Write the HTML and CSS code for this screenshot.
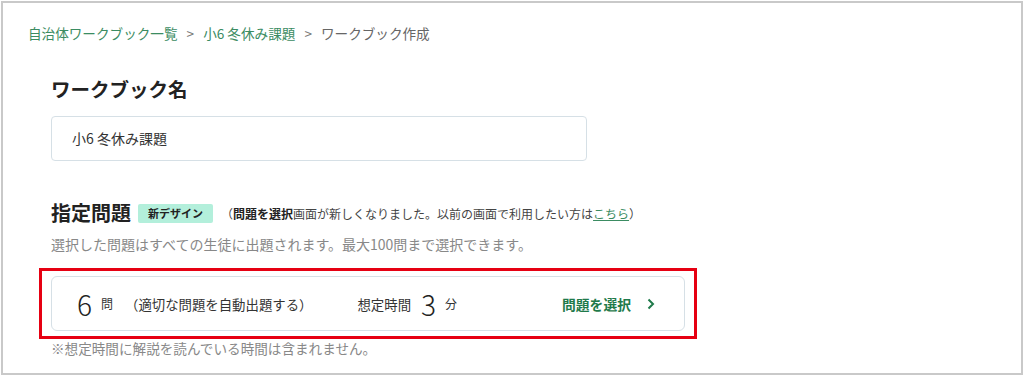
FILE: index.html
```html
<!DOCTYPE html>
<html lang="ja">
<head>
    <meta charset="UTF-8">
    <meta name="viewport" content="width=device-width, initial-scale=1.0">
    <title>ワークブック作成</title>
    <link rel="stylesheet" href="styles.css">
</head>
<body>

    <div class="frame">

        <!-- パンくず -->
        <div class="breadcrumb">
            <a href="#">自治体ワークブック一覧</a>
            <span class="sep">&gt;</span>
            <a href="#">小6 冬休み課題</a>
            <span class="sep">&gt;</span>
            <span class="current">ワークブック作成</span>
        </div>

        <div class="form">
            <h2 class="title">ワークブック名</h2>
            <div class="name-input">小6&nbsp;冬休み課題</div>

            <div class="title-row">
                <h2 class="title">指定問題</h2>
                <span class="badge">新デザイン</span>
                <span class="notice">（<b>問題を選択</b>画面が新しくなりました。以前の画面で利用したい方は<a href="#">こちら</a>）</span>
            </div>
            <p class="desc">選択した問題はすべての生徒に出題されます。最大100問まで選択できます。</p>

            <!-- 赤枠（注目箇所） -->
            <div class="highlight">
                <div class="card">
                    <span class="big">6</span>
                    <span class="unit">問</span>
                    <span class="auto">（適切な問題を自動出題する）</span>
                    <span class="label">想定時間</span>
                    <span class="big">3</span>
                    <span class="unit">分</span>
                    <a href="#" class="select">問題を選択
                        <svg width="8" height="12" viewBox="0 0 8 12"><polyline points="1.5,1.5 6,6 1.5,10.5" fill="none" stroke="#1f7a4a" stroke-width="2"/></svg>
                    </a>
                </div>
            </div>
            <p class="note">※想定時間に解説を読んでいる時間は含まれません。</p>
        </div>
    </div>

</body>
</html>
```

FILE: styles.css
```css
    body, html {
        margin: 0;
        padding: 0;
        background-color: white;
        font-family: "Noto Sans CJK JP", "Noto Sans", sans-serif;
        color: #222;
    }

    .frame {
        margin: 1px 1px 0 1px;
        height: 374px;
        box-sizing: border-box;
        border: 2px solid #c9c9c9;
        padding: 20px 0 0 25px;
    }

    .breadcrumb {
        font-size: 13.6px;
        line-height: 20px;
        color: #666;
    }

    .breadcrumb a {
        color: #3b8c62;
        text-decoration: none;
    }

    .breadcrumb .sep {
        margin: 0 6px;
        color: #777;
    }

    .form {
        margin-left: 23px;
    }

    .title {
        margin: 33px 0 0 0;
        font-size: 19.5px;
        line-height: 26px;
        font-weight: bold;
    }

    .name-input {
        margin-top: 14px;
        width: 536px;
        height: 45px;
        box-sizing: border-box;
        border: 1px solid #d6e0e6;
        border-radius: 4px;
        padding: 0 20px;
        font-size: 14px;
        line-height: 43px;
        color: #333;
    }

    .title-row {
        display: flex;
        align-items: center;
        margin-top: 39px;
    }

    .title-row .title {
        margin: 0;
        font-size: 20px;
    }

    .badge {
        margin-left: 7px;
        background-color: #b3efdb;
        border-radius: 2px;
        font-size: 11px;
        font-weight: bold;
        line-height: 19px;
        padding: 0 10px;
    }

    .notice {
        margin-left: 8px;
        font-size: 12px;
        line-height: 19px;
        color: #444;
    }

    .notice b {
        color: #222;
    }

    .notice a {
        color: #3b8c62;
    }

    .desc {
        margin: 8px 0 0 0;
        font-size: 14px;
        line-height: 20px;
        color: #888;
    }

    .highlight {
        margin: 14px 0 0 -12px;
        width: 658px;
        box-sizing: border-box;
        border: 3px solid #e60012;
        padding: 5px 9px;
    }

    .card {
        height: 55px;
        box-sizing: border-box;
        border: 1px solid #d6e0e6;
        border-radius: 6px;
        display: flex;
        align-items: center;
        padding: 0 29px 0 25px;
        font-size: 13.4px;
        color: #333;
    }

    .card .big {
        font-size: 28px;
        font-weight: 300;
        line-height: 30px;
        color: #222;
    }

    .card .unit {
        margin-left: 9px;
        font-size: 12px;
    }

    .card .auto {
        margin-left: 12px;
        margin-right: 45px;
    }

    .card .label {
        margin-right: 10px;
    }

    .select {
        margin-left: auto;
        display: flex;
        align-items: center;
        color: #1f7a4a;
        font-weight: bold;
        font-size: 13.8px;
        text-decoration: none;
    }

    .select svg {
        margin-left: 16px;
    }

    .note {
        margin: 0;
        font-size: 13.6px;
        line-height: 18px;
        color: #888;
    }
```
